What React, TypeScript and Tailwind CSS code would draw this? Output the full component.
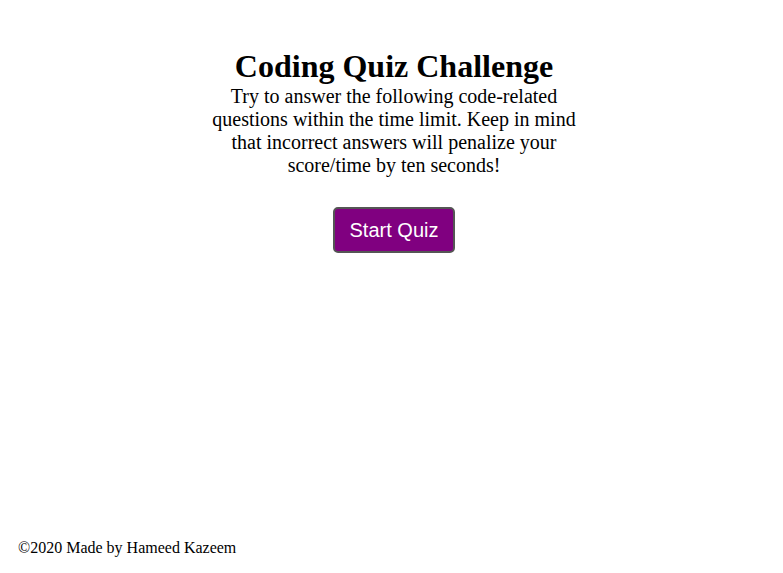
export default function App() {
  return (
    <div className="flex h-[573px] flex-col bg-white text-black font-['Liberation_Serif',serif]">
      {/* quiz intro */}
      <main className="flex flex-1 flex-col items-center pl-[5px] pt-[48px]">
        <h1 className="text-[32px] font-bold leading-[normal]">Coding Quiz Challenge</h1>
        <p className="w-[372px] text-center text-[20px] leading-[normal]">
          Try to answer the following code-related questions within the time limit. Keep in mind that incorrect answers will penalize your score/time by ten seconds!
        </p>
        <button className="mt-[30px] h-[46px] w-[122px] rounded-[5px] border-2 border-[#555555] bg-[#800080] font-['Liberation_Sans',sans-serif] text-[20px] text-white">
          Start Quiz
        </button>
      </main>

      <footer className="px-[18px] pb-[16px] text-[16px] leading-[normal]">©2020 Made by Hameed Kazeem</footer>
    </div>
  );
}
